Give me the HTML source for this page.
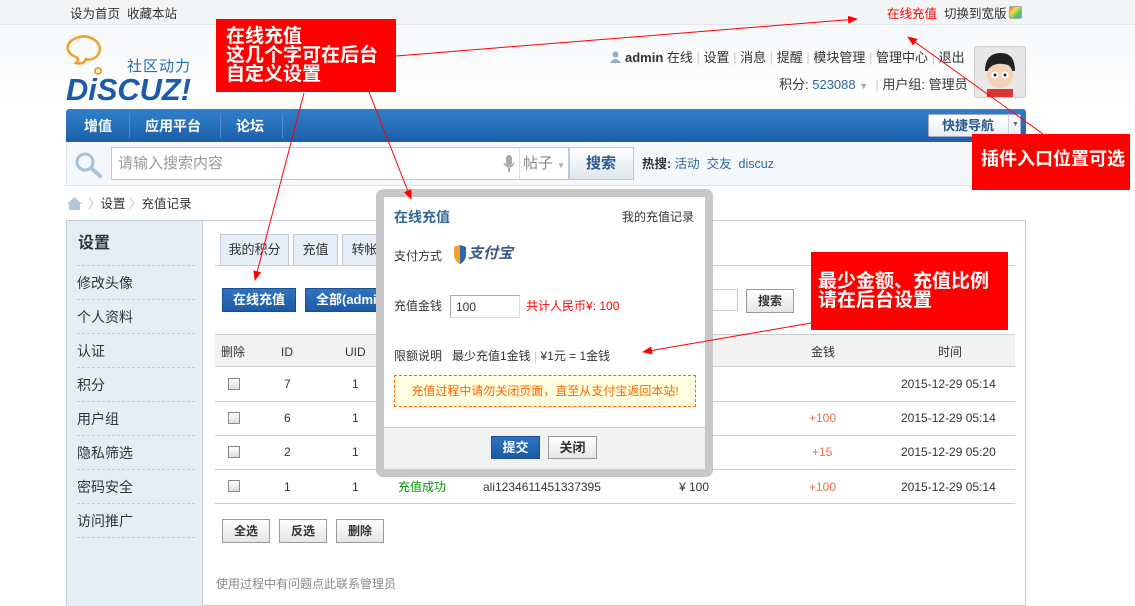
<!DOCTYPE html>
<html><head><meta charset="utf-8"><style>
*{margin:0;padding:0;box-sizing:border-box}
body{width:1135px;height:605px;overflow:hidden;position:relative;background:#fff;font-family:"Liberation Sans","Noto Sans CJK SC",sans-serif;font-size:12px;color:#333;line-height:1.3}
.a{position:absolute;white-space:nowrap}
.blue{color:#336699}
.btn{position:absolute;border:1px solid #999;background:linear-gradient(#fff,#e5e5e5);font-weight:bold;text-align:center;font-size:12px;color:#333}
.bbtn{position:absolute;background:linear-gradient(#2f74c2,#1b5aa6);border:1px solid #1a4f8f;color:#fff;font-weight:bold;text-align:center;font-size:13px;white-space:nowrap;overflow:hidden}
.rb{position:absolute;background:#ff0000;color:#fff;font-weight:bold;font-size:19px;line-height:19px;padding:0 0 0 10px;white-space:nowrap}
.side{position:absolute;left:77px;width:118px;font-size:14px;color:#333}
.dash{position:absolute;left:77px;width:118px;border-top:1px dashed #c5ccd5}
.hr{position:absolute;left:215px;width:800px;border-top:1px solid #ccc}
.cb{position:absolute;width:12px;height:12px;border:1px solid #888;background:linear-gradient(#fff,#ddd)}
</style></head><body>
<div class="a" style="left:0;top:0;width:1135px;height:25px;background:#f2f4f5;border-bottom:1px solid #e2e5e8"></div>
<div class="a" style="left:0;top:25px;width:1135px;height:84px;background:linear-gradient(#f6f8fa,#fff)"></div>
<div class="a" style="left:70px;top:6px;font-size:12.5px">设为首页&nbsp;&nbsp;收藏本站</div>
<div class="a" style="left:887px;top:6px;color:#f00;font-size:12.5px">在线充值</div>
<div class="a" style="left:944px;top:6px;font-size:12.5px">切换到宽版</div>
<div class="a" style="left:1009px;top:6px;width:13px;height:13px;border:1px solid #aaa;border-radius:2px;background:linear-gradient(135deg,#f55,#fd4,#5c5,#59f)"></div>
<svg class="a" style="left:66px;top:35px" width="135" height="70" viewBox="0 0 135 70">
<path d="M8 4 Q20 -2 30 6 Q38 14 30 22 Q24 26 20 24 Q18 30 10 28 Q14 24 10 22 Q0 18 2 10 Q4 6 8 4Z" fill="none" stroke="#f0a030" stroke-width="2.5"/>
<circle cx="32" cy="36" r="3" fill="none" stroke="#f0a030" stroke-width="2"/>
<text x="0" y="65" font-family="Liberation Sans" font-style="italic" font-weight="bold" font-size="31" fill="#1c5ba8" textLength="125" lengthAdjust="spacingAndGlyphs">DiSCUZ!</text>
</svg>
<div class="a" style="left:127px;top:57px;font-size:15px;color:#2a6bb5;letter-spacing:1px">社区动力</div>
<div class="a" style="left:610px;top:51px;width:11px;height:12px"><svg width="11" height="12"><circle cx="5.5" cy="3.5" r="3" fill="#9ab"/><path d="M0 12 Q5.5 4 11 12Z" fill="#9ab"/></svg></div>
<div class="a" style="left:625px;top:50px;font-size:13px"><b>admin</b> 在线 <span style="color:#ccc">|</span> 设置 <span style="color:#ccc">|</span> 消息 <span style="color:#ccc">|</span> 提醒 <span style="color:#ccc">|</span> 模块管理 <span style="color:#ccc">|</span> 管理中心 <span style="color:#ccc">|</span> 退出</div>
<div class="a" style="left:779px;top:77px;font-size:13px">积分: <span class="blue">523088</span> <span style="color:#aaa;font-size:9px">▼</span>&nbsp;&nbsp;<span style="color:#ccc">|</span> 用户组: 管理员</div>
<div class="a" style="left:974px;top:46px;width:52px;height:52px;border:1px solid #ccc;border-radius:3px;background:#e8e8e8;overflow:hidden">
<svg width="50" height="50"><path d="M10 24 Q10 6 26 6 Q40 6 40 24 Z" fill="#222"/><ellipse cx="25" cy="28" rx="13" ry="13" fill="#f3d3b8"/><path d="M12 24 Q20 12 38 20 L38 16 Q26 6 12 18Z" fill="#222"/><circle cx="20" cy="28" r="3.5" fill="#fff"/><circle cx="30" cy="28" r="3.5" fill="#fff"/><circle cx="20" cy="28" r="1.5" fill="#222"/><circle cx="30" cy="28" r="1.5" fill="#222"/><rect x="12" y="42" width="26" height="10" fill="#d33"/></svg></div>
<div class="a" style="left:66px;top:109px;width:960px;height:33px;background:linear-gradient(#3080cc,#1d5ea8);border-radius:3px 3px 0 0"></div>
<div class="a" style="left:84px;top:117px;color:#fff;font-weight:bold;font-size:14px">增值</div>
<div class="a" style="left:129px;top:114px;height:24px;border-left:1px solid #4f8ad0"></div>
<div class="a" style="left:145px;top:117px;color:#fff;font-weight:bold;font-size:14px">应用平台</div>
<div class="a" style="left:220px;top:114px;height:24px;border-left:1px solid #4f8ad0"></div>
<div class="a" style="left:236px;top:117px;color:#fff;font-weight:bold;font-size:14px">论坛</div>
<div class="a" style="left:282px;top:114px;height:24px;border-left:1px solid #4f8ad0"></div>
<div class="a" style="left:928px;top:114px;width:93px;height:23px;background:linear-gradient(#fff,#e8eef5);border:1px solid #aac;border-radius:2px"></div>
<div class="a" style="left:942px;top:117px;color:#2a5a92;font-weight:bold;font-size:13px;line-height:17px">快捷导航</div>
<div class="a" style="left:1008px;top:114px;height:23px;border-left:1px solid #ccd"></div>
<div class="a" style="left:1012px;top:121px;color:#666;font-size:7px;line-height:8px">▼</div>
<div class="a" style="left:66px;top:142px;width:960px;height:44px;background:#f5f8fb;border:1px solid #dbe3ec;border-top:none"></div>
<svg class="a" style="left:74px;top:151px" width="30" height="28"><circle cx="11" cy="11" r="8" fill="none" stroke="#a9c0d8" stroke-width="3"/><path d="M17 17 L26 25" stroke="#a9c0d8" stroke-width="4" stroke-linecap="round"/></svg>
<div class="a" style="left:111px;top:147px;width:458px;height:33px;background:#fff;border:1px solid #bcc9d6"></div>
<div class="a" style="left:118px;top:154px;color:#999;font-size:15px">请输入搜索内容</div>
<svg class="a" style="left:503px;top:155px" width="12" height="18"><rect x="3" y="0" width="6" height="11" rx="3" fill="#aaa"/><path d="M1 8 Q6 16 11 8" fill="none" stroke="#aaa" stroke-width="1.5"/><rect x="5" y="13" width="2" height="4" fill="#aaa"/></svg>
<div class="a" style="left:519px;top:148px;height:31px;border-left:1px solid #e0e0e0"></div>
<div class="a" style="left:523px;top:154px;color:#888;font-size:15px">帖子 <span style="font-size:8px;color:#aaa">▼</span></div>
<div class="a" style="left:569px;top:147px;width:65px;height:33px;background:linear-gradient(#fff,#e0e6ee);border:1px solid #bcc9d6"></div>
<div class="a" style="left:586px;top:154px;color:#2a5a92;font-weight:bold;font-size:15px">搜索</div>
<div class="a" style="left:642px;top:156px;font-size:12.5px"><b>热搜:</b> <span class="blue">活动&nbsp;&nbsp;交友&nbsp;&nbsp;discuz</span></div>
<svg class="a" style="left:67px;top:197px" width="15" height="13"><path d="M7.5 0 L15 7 L13 7 L13 13 L2 13 L2 7 L0 7Z" fill="#b5c6d8"/></svg>
<div class="a" style="left:88px;top:196px;font-size:12.5px"><span style="color:#bbb">〉</span>设置 <span style="color:#bbb">〉</span>充值记录</div>
<div class="a" style="left:66px;top:220px;width:960px;height:386px;border:1px solid #c5ccd5"></div>
<div class="a" style="left:67px;top:221px;width:136px;height:385px;background:#e5edf5;border-right:1px solid #c5ccd5"></div>
<div class="a" style="left:78px;top:234px;font-size:16px;font-weight:bold">设置</div>
<div class="dash" style="top:265px"></div>
<div class="side" style="top:274px">修改头像</div><div class="dash" style="top:299px"></div>
<div class="side" style="top:308px">个人资料</div><div class="dash" style="top:333px"></div>
<div class="side" style="top:342px">认证</div><div class="dash" style="top:367px"></div>
<div class="side" style="top:376px">积分</div><div class="dash" style="top:401px"></div>
<div class="side" style="top:410px">用户组</div><div class="dash" style="top:435px"></div>
<div class="side" style="top:444px">隐私筛选</div><div class="dash" style="top:469px"></div>
<div class="side" style="top:478px">密码安全</div><div class="dash" style="top:503px"></div>
<div class="side" style="top:512px">访问推广</div><div class="dash" style="top:537px"></div>
<div class="a" style="left:220px;top:234px;width:69px;height:32px;background:#e5edf5;border:1px solid #c5ccd5;text-align:center;line-height:30px;font-size:13px">我的积分</div>
<div class="a" style="left:293px;top:234px;width:45px;height:32px;background:#e5edf5;border:1px solid #c5ccd5;text-align:center;line-height:30px;font-size:13px">充值</div>
<div class="a" style="left:342px;top:234px;width:45px;height:32px;background:#e5edf5;border:1px solid #c5ccd5;text-align:center;line-height:30px;font-size:13px">转帐</div>
<div class="hr" style="top:265px"></div>
<div class="bbtn" style="left:222px;top:288px;width:74px;height:24px;line-height:22px">在线充值</div>
<div class="bbtn" style="left:305px;top:288px;width:95px;height:24px;line-height:22px;text-align:left;padding-left:10px">全部(admin)</div>
<div class="a" style="left:700px;top:289px;width:38px;height:22px;border:1px solid #ccc"></div>
<div class="btn" style="left:746px;top:289px;width:48px;height:24px;line-height:22px">搜索</div>
<div class="a" style="left:215px;top:334px;width:800px;height:33px;background:#f2f2f2;border-top:1px solid #ccc;border-bottom:1px solid #ccc"></div>
<div class="a" style="left:221px;top:345px">删除</div>
<div class="a" style="left:281px;top:345px">ID</div>
<div class="a" style="left:345px;top:345px">UID</div>
<div class="a" style="left:811px;top:345px">金钱</div>
<div class="a" style="left:938px;top:345px">时间</div>
<div class="hr" style="top:401px"></div><div class="hr" style="top:435px"></div><div class="hr" style="top:469px"></div><div class="hr" style="top:503px"></div>
<div class="cb" style="left:228px;top:378px"></div><div class="cb" style="left:228px;top:412px"></div><div class="cb" style="left:228px;top:446px"></div><div class="cb" style="left:228px;top:480px"></div>
<div class="a" style="left:284px;top:377px">7</div><div class="a" style="left:284px;top:411px">6</div><div class="a" style="left:284px;top:445px">2</div><div class="a" style="left:284px;top:480px">1</div>
<div class="a" style="left:352px;top:377px">1</div><div class="a" style="left:352px;top:411px">1</div><div class="a" style="left:352px;top:445px">1</div><div class="a" style="left:352px;top:480px">1</div>
<div class="a" style="left:398px;top:480px;color:#090">充值成功</div>
<div class="a" style="left:483px;top:480px">ali1234611451337395</div>
<div class="a" style="left:679px;top:480px">¥ 100</div>
<div class="a" style="left:809px;top:411px;color:#f26c4f">+100</div>
<div class="a" style="left:812px;top:445px;color:#f26c4f">+15</div>
<div class="a" style="left:809px;top:480px;color:#f26c4f">+100</div>
<div class="a" style="left:901px;top:377px">2015-12-29 05:14</div>
<div class="a" style="left:901px;top:411px">2015-12-29 05:14</div>
<div class="a" style="left:901px;top:445px">2015-12-29 05:20</div>
<div class="a" style="left:901px;top:480px">2015-12-29 05:14</div>
<div class="btn" style="left:222px;top:519px;width:48px;height:24px;line-height:22px">全选</div>
<div class="btn" style="left:279px;top:519px;width:48px;height:24px;line-height:22px">反选</div>
<div class="btn" style="left:336px;top:519px;width:48px;height:24px;line-height:22px">删除</div>
<div class="a" style="left:216px;top:577px;color:#888">使用过程中有问题点此联系管理员</div>
<div class="a" style="left:376px;top:189px;width:337px;height:288px;background:#c8c8c8;border-radius:7px"></div>
<div class="a" style="left:384px;top:197px;width:321px;height:272px;background:#fff"></div>
<div class="a" style="left:394px;top:208px;color:#336699;font-weight:bold;font-size:14px">在线充值</div>
<div class="a" style="left:622px;top:210px">我的充值记录</div>
<div class="a" style="left:394px;top:249px">支付方式</div>
<svg class="a" style="left:452px;top:245px" width="64" height="20"><path d="M2 2 L8 0 L14 2 L14 9 Q14 16 8 19 Q2 16 2 9Z" fill="#f3a028"/><path d="M8 0 L14 2 L14 9 Q14 16 8 19Z" fill="#2a68b0"/></svg>
<div class="a" style="left:468px;top:244px;font-size:15px;font-weight:bold;color:#3a5a8a;font-style:italic">支付宝</div>
<div class="a" style="left:394px;top:299px">充值金钱</div>
<div class="a" style="left:450px;top:295px;width:70px;height:23px;border:1px solid #aaa;border-right-color:#ddd;border-bottom-color:#ddd;padding:4px 5px;color:#333">100</div>
<div class="a" style="left:526px;top:299px;color:#f00">共计人民币¥: 100</div>
<div class="a" style="left:394px;top:349px">限额说明&nbsp;&nbsp;&nbsp;最少充值1金钱 <span style="color:#ccc">|</span> ¥1元 = 1金钱</div>
<div class="a" style="left:394px;top:375px;width:302px;height:32px;background:#ffffe0;border:1px dashed #f60;color:#f60;text-align:center;line-height:30px">充值过程中请勿关闭页面，直至从支付宝返回本站!</div>
<div class="a" style="left:384px;top:427px;width:321px;height:42px;background:#f2f2f2;border-top:1px solid #ccc"></div>
<div class="bbtn" style="left:491px;top:436px;width:49px;height:23px;line-height:21px">提交</div>
<div class="btn" style="left:548px;top:436px;width:49px;height:23px;line-height:21px;font-size:13px">关闭</div>
<div class="rb" style="left:216px;top:19px;width:180px;height:73px;padding-top:8px">在线充值<br>这几个字可在后台<br>自定义设置</div>
<div class="rb" style="left:972px;top:134px;width:158px;height:56px;padding:16px 0 0 9px;font-size:18px">插件入口位置可选</div>
<div class="rb" style="left:811px;top:252px;width:197px;height:78px;padding:20px 0 0 7px">最少金额、充值比例<br>请在后台设置</div>
<svg class="a" style="left:0;top:0" width="1135" height="605">
<defs><marker id="m" markerWidth="10" markerHeight="8" refX="9" refY="4" orient="auto" markerUnits="userSpaceOnUse"><path d="M0 0 L10 4 L0 8Z" fill="#f00"/></marker></defs>
<g stroke="#f00" stroke-width="1" marker-end="url(#m)">
<line x1="396" y1="56" x2="857" y2="19"/>
<line x1="304" y1="93" x2="255" y2="280"/>
<line x1="369" y1="92" x2="411" y2="199"/>
<line x1="1043" y1="134" x2="908" y2="37"/>
<line x1="811" y1="323" x2="643" y2="352"/>
</g></svg>
</body></html>
